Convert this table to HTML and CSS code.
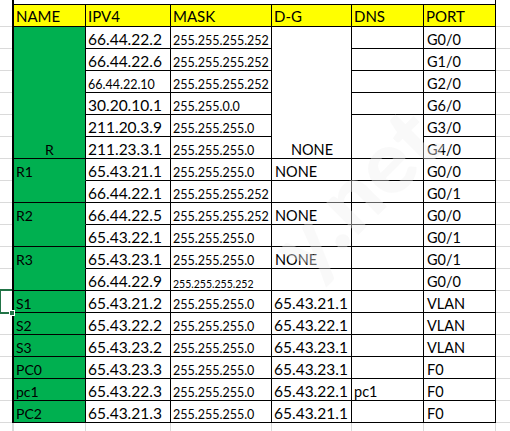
FILE: index.html
```
<!DOCTYPE html>
<html>
<head>
<meta charset="utf-8">
<link rel="stylesheet" href="styles.css">
</head>
<body>
<div class="sheet">
  <div class="cap"></div>
  <div class="grid">
    <div class="c h">NAME</div><div class="c h">IPV4</div><div class="c h">MASK</div><div class="c h">D-G</div><div class="c h">DNS</div><div class="c h">PORT</div>

    <div class="c g nm span6 center">R</div><div class="c ip">66.44.22.2</div><div class="c m">255.255.255.252</div><div class="c span6 center pt">NONE</div><div class="c"></div><div class="c pt">G0/0</div>
    <div class="c ip">66.44.22.6</div><div class="c m">255.255.255.252</div><div class="c"></div><div class="c pt">G1/0</div>
    <div class="c m">66.44.22.10</div><div class="c m">255.255.255.252</div><div class="c"></div><div class="c pt">G2/0</div>
    <div class="c ip">30.20.10.1</div><div class="c m">255.255.0.0</div><div class="c"></div><div class="c pt">G6/0</div>
    <div class="c ip">211.20.3.9</div><div class="c m">255.255.255.0</div><div class="c span2"></div><div class="c pt">G3/0</div>
    <div class="c ip">211.23.3.1</div><div class="c m">255.255.255.0</div><div class="c pt">G4/0</div>

    <div class="c g nm nb">R1</div><div class="c ip">65.43.21.1</div><div class="c m">255.255.255.0</div><div class="c pt">NONE</div><div class="c"></div><div class="c pt">G0/0</div>
    <div class="c g nm"></div><div class="c ip">66.44.22.1</div><div class="c m">255.255.255.252</div><div class="c"></div><div class="c"></div><div class="c pt">G0/1</div>
    <div class="c g nm nb">R2</div><div class="c ip">66.44.22.5</div><div class="c m">255.255.255.252</div><div class="c pt">NONE</div><div class="c"></div><div class="c pt">G0/0</div>
    <div class="c g nm"></div><div class="c ip">65.43.22.1</div><div class="c m">255.255.255.0</div><div class="c"></div><div class="c"></div><div class="c pt">G0/1</div>
    <div class="c g nm nb">R3</div><div class="c ip">65.43.23.1</div><div class="c m">255.255.255.0</div><div class="c pt">NONE</div><div class="c"></div><div class="c pt">G0/1</div>
    <div class="c g nm"></div><div class="c ip">66.44.22.9</div><div class="c xs">255.255.255.252</div><div class="c"></div><div class="c"></div><div class="c pt">G0/0</div>

    <div class="c g nm">S1</div><div class="c ip">65.43.21.2</div><div class="c m">255.255.255.0</div><div class="c ip">65.43.21.1</div><div class="c"></div><div class="c pt">VLAN</div>
    <div class="c g nm">S2</div><div class="c ip">65.43.22.2</div><div class="c m">255.255.255.0</div><div class="c ip">65.43.22.1</div><div class="c"></div><div class="c pt">VLAN</div>
    <div class="c g nm">S3</div><div class="c ip">65.43.23.2</div><div class="c m">255.255.255.0</div><div class="c ip">65.43.23.1</div><div class="c"></div><div class="c pt">VLAN</div>
    <div class="c g nm">PC0</div><div class="c ip">65.43.23.3</div><div class="c m">255.255.255.0</div><div class="c ip">65.43.23.1</div><div class="c"></div><div class="c pt">F0</div>
    <div class="c g nm">pc1</div><div class="c ip">65.43.22.3</div><div class="c m">255.255.255.0</div><div class="c ip">65.43.22.1</div><div class="c dn">pc1</div><div class="c pt">F0</div>
    <div class="c g nm">PC2</div><div class="c ip">65.43.21.3</div><div class="c m">255.255.255.0</div><div class="c ip">65.43.21.1</div><div class="c"></div><div class="c pt">F0</div>
  </div>
  <div class="ghost">
    <div class="gc"></div><div class="gc"></div><div class="gc"></div><div class="gc"></div><div class="gc"></div><div class="gc"></div>
  </div>
  <div class="sel"><div class="handle"></div></div>
  <div class="wm">y.net</div>
</div>
</body>
</html>
```
FILE: styles.css
```
* { box-sizing: border-box; }
body {
  margin: 0;
  font-family: Lato, "Liberation Sans", sans-serif;
  color: #000;
  background: #fff;
}
.sheet {
  position: relative;
  width: 510px;
  height: 431px;
  overflow: hidden;
  background-color: #fff;
  background-image: repeating-linear-gradient(180deg, transparent 0, transparent 21px, #dadada 21px, #dadada 22px);
  background-position: 0 5px;
}
.cap {
  margin-left: 12px;
  width: 484px;
  height: 4px;
  border-left: 2px solid #000;
  border-right: 1px solid #000;
  background: #fff;
}
.grid {
  margin-left: 12px;
  width: 484px;
  display: grid;
  grid-template-columns: 72px 85px 101px 80px 72px 72px;
  grid-auto-rows: 22px;
  border-left: 2px solid #000;
  border-top: 1px solid #000;
  background: #fff;
}
.c {
  display: flex;
  align-items: flex-end;
  padding: 0 2px 1px 2px;
  border-right: 1px solid #000;
  border-bottom: 1px solid #000;
  background: #fff;
  font-size: 15px;
  line-height: 1;
  white-space: nowrap;
  overflow: hidden;
}
.h { background: #ffff00; padding-bottom: 2px; }
.g { background: #00b050; }
.nb { border-bottom-color: transparent; }
.span6 { grid-row: span 6; }
.span2 { grid-row: span 2; }
.center { justify-content: center; }
.ip { font-size: 15.5px; }
.m { font-size: 12.5px; }
.xs { font-size: 10.5px; }
.nm { font-size: 14px; }
.pt { font-size: 14.5px; padding-left: 3px; }
.dn { font-size: 14.5px; }
.ghost {
  margin-left: 12px;
  width: 484px;
  height: 22px;
  display: grid;
  grid-template-columns: 72px 85px 101px 80px 72px 72px;
  border-left: 2px solid #dadada;
  background: #fff;
}
.gc { border-right: 1px solid #dadada; }
.sel {
  position: absolute;
  left: -1px;
  top: 289px;
  width: 13px;
  height: 25px;
  border: 2px solid #217346;
  border-right: none;
}
.handle {
  position: absolute;
  right: -3px;
  bottom: -4px;
  width: 6px;
  height: 6px;
  background: #217346;
  border: 1px solid #fff;
}
.wm {
  position: absolute;
  left: 285px;
  top: 215px;
  font-size: 88px;
  line-height: 90px;
  font-weight: 900;
  color: rgba(240, 240, 240, 0.4);
  transform: rotate(-45deg);
  transform-origin: left center;
  white-space: nowrap;
  pointer-events: none;
}
```
